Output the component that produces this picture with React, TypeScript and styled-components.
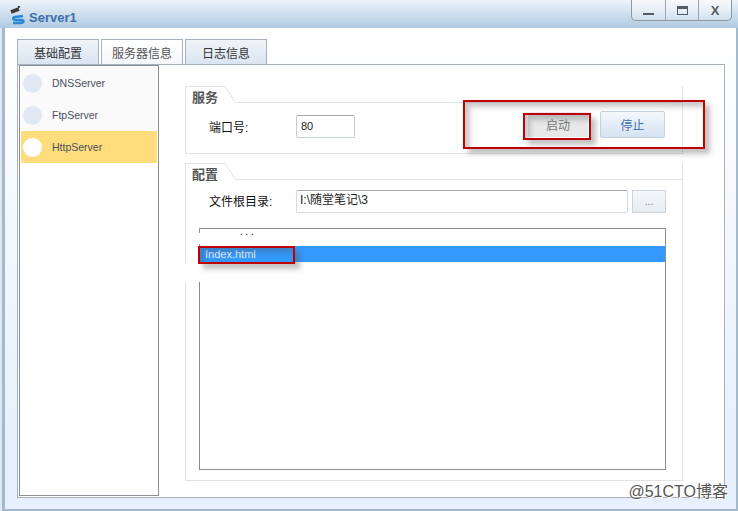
import { FC, ReactNode } from "react";
import styled, { createGlobalStyle } from "styled-components";

const UI_FONT = `"Liberation Sans", "Noto Sans CJK SC", sans-serif`;

const GlobalStyle = createGlobalStyle`
  html, body {
    margin: 0;
    padding: 0;
    background: #fff;
  }
  * {
    box-sizing: border-box;
  }
`;

const services = ["DNSServer", "FtpServer", "HttpServer"];

const Group: FC<{ title: string; children: ReactNode }> = ({ title, children }) => (
  <GroupBox>
    <GroupHead>
      <GroupTitle>{title}</GroupTitle>
      <svg width="11" height="17" viewBox="0 0 11 17">
        <path d="M0 0.5 L10.5 16.5" stroke="#e2e2e2" fill="none" />
      </svg>
      <GroupLine />
    </GroupHead>
    {children}
  </GroupBox>
);

export default function App() {
  return (
    <>
      <GlobalStyle />
      <Window>
        <TitleBar>
          <svg width="16" height="19" viewBox="0 0 16 19">
            <path d="M1 6 L9 3" stroke="#3a3a3a" strokeWidth="3.5" fill="none" />
            <path d="M8 1 L10 0.5" stroke="#3a3a3a" strokeWidth="2" fill="none" />
            <path
              d="M13 10 L5 11 C2 12 3 14 6 14 L12 14 C15 15 13 17 10 17 L3 17"
              stroke="#2a86d6"
              strokeWidth="2.6"
              fill="none"
            />
          </svg>
          <AppName>Server1</AppName>
          <WindowButtons>
            <WindowButton>
              <MinGlyph />
            </WindowButton>
            <WindowButton>
              <MaxGlyph />
            </WindowButton>
            <WindowButton>
              <CloseGlyph>X</CloseGlyph>
            </WindowButton>
          </WindowButtons>
        </TitleBar>
        <Client>
          <Tabs>
            <Tab>基础配置</Tab>
            <Tab $active>服务器信息</Tab>
            <Tab>日志信息</Tab>
          </Tabs>
          <Panel>
            <Sidebar>
              {services.map((name) => (
                <ServiceItem key={name} $selected={name === "HttpServer"}>
                  <ServiceDot $selected={name === "HttpServer"} />
                  {name}
                </ServiceItem>
              ))}
            </Sidebar>
            <Content>
              <Group title="服务">
                <ServiceRow>
                  <PortLabel>端口号:</PortLabel>
                  <PortInput>80</PortInput>
                  <StartButton>启动</StartButton>
                  <StopButton>停止</StopButton>
                </ServiceRow>
              </Group>
              <Group title="配置">
                <PathRow>
                  <PathLabel>文件根目录:</PathLabel>
                  <PathInput>I:\随堂笔记\3</PathInput>
                  <BrowseButton>...</BrowseButton>
                </PathRow>
                <FileList>
                  <ParentRow>. . .</ParentRow>
                  <SelectedRow>Index.html</SelectedRow>
                </FileList>
              </Group>
            </Content>
          </Panel>
        </Client>
        <ListGap />
        <GroupGap />
        <RedBox $x={463} $y={100} $w={242} $h={49} />
        <RedBox $x={523} $y={113} $w={68} $h={27} />
        <RedBox $x={198} $y={246} $w={97} $h={18} />
        <Watermark>@51CTO博客</Watermark>
      </Window>
    </>
  );
}

const Window = styled.div`
  position: relative;
  width: 738px;
  height: 511px;
  display: flex;
  flex-direction: column;
  padding: 0 2px 2px 5px;
  overflow: hidden;
  background: linear-gradient(to right, #dfe8f0 2px, #a3b9cc 2px);
  font-family: ${UI_FONT};
  font-size: 12px;
  color: #222;
`;

const TitleBar = styled.div`
  flex: 0 0 28px;
  margin: 0 -2px 0 -5px;
  padding-left: 10px;
  display: flex;
  align-items: flex-start;
  gap: 3px;
  background: linear-gradient(#eef3f9, #afcae2);
  svg {
    margin-top: 6px;
    flex: none;
  }
`;

const AppName = styled.div`
  margin-top: 10px;
  font-size: 13px;
  font-weight: bold;
  color: #3e6fa8;
`;

const WindowButtons = styled.div`
  display: flex;
  margin-left: auto;
  margin-right: 6px;
  height: 21px;
  border: 1px solid #8e979f;
  border-top: none;
  border-radius: 0 0 5px 5px;
  background: linear-gradient(rgba(255, 255, 255, 0.5), rgba(255, 255, 255, 0.25));
`;

const WindowButton = styled.div`
  width: 33px;
  display: flex;
  align-items: center;
  justify-content: center;
  & + & {
    border-left: 1px solid #9aa3ab;
  }
`;

const MinGlyph = styled.div`
  width: 11px;
  height: 2px;
  margin-top: 8px;
  background: #555b66;
`;

const MaxGlyph = styled.div`
  width: 11px;
  height: 9px;
  border: 1px solid #555b66;
  border-top-width: 3px;
`;

const CloseGlyph = styled.div`
  font-size: 13px;
  font-weight: bold;
  color: #555b66;
`;

const Client = styled.div`
  flex: 1;
  display: flex;
  flex-direction: column;
  padding: 11px 11px 11px 12px;
  background: linear-gradient(#fff, #e8f0fd 85%);
`;

const Tabs = styled.div`
  flex: 0 0 25px;
  display: flex;
  gap: 2px;
`;

const Tab = styled.div<{ $active?: boolean }>`
  width: 82px;
  display: flex;
  align-items: center;
  justify-content: center;
  font-size: 12px;
  color: ${(p) => (p.$active ? "#555" : "#333")};
  border: 1px solid #a9b2ba;
  border-bottom: none;
  background: ${(p) => (p.$active ? "linear-gradient(#fff, #f4f7fb)" : "linear-gradient(#f0f4f8, #d9e5f1)")};
`;

const Panel = styled.div`
  flex: 1;
  display: flex;
  padding: 0 0 1px 1px;
  border: 1px solid #a9b2ba;
  background: #fff;
`;

const Sidebar = styled.div`
  flex: 0 0 140px;
  padding: 1px;
  border: 1px solid #8a8f96;
  background: #fff;
`;

const ServiceItem = styled.div<{ $selected?: boolean }>`
  height: 32px;
  padding-left: 2px;
  display: flex;
  align-items: center;
  gap: 10px;
  font-size: 10.5px;
  color: #4a5060;
  background: ${(p) => (p.$selected ? "#ffdd7d" : "#fafafa")};
`;

const ServiceDot = styled.div<{ $selected?: boolean }>`
  width: 19px;
  height: 19px;
  border-radius: 50%;
  background: ${(p) => (p.$selected ? "#fff" : "#e1e8f3")};
`;

const Content = styled.div`
  flex: 1;
  display: flex;
  flex-direction: column;
  gap: 9px;
  padding: 21px 41px 15px 26px;
`;

const GroupBox = styled.section`
  display: flex;
  flex-direction: column;
  border: 1px solid #e2e2e2;
  border-top: none;
  &:last-child {
    flex: 1;
  }
`;

const GroupHead = styled.div`
  flex: 0 0 17px;
  display: flex;
  margin-left: -1px;
  svg {
    flex: none;
    display: block;
  }
`;

const GroupTitle = styled.div`
  width: 40px;
  height: 17px;
  padding: 2px 0 0 6px;
  border-top: 1px solid #e2e2e2;
  border-left: 1px solid #e2e2e2;
  font-size: 13px;
  font-weight: bold;
  line-height: 17px;
  color: #555;
`;

const GroupLine = styled.div`
  flex: 1;
  border-bottom: 1px solid #e2e2e2;
`;

const ServiceRow = styled.div`
  height: 50px;
  padding-top: 8px;
  display: flex;
  align-items: flex-start;
`;

const PortLabel = styled.div`
  width: 110px;
  padding: 7px 0 0 23px;
  color: #111;
`;

const PortInput = styled.div`
  width: 59px;
  height: 23px;
  margin-top: 4px;
  padding: 0 4px;
  line-height: 21px;
  font-size: 11px;
  border: 1px solid #c5cdd6;
  border-top-color: #a4a8ad;
  border-radius: 2px;
`;

const ActionButton = styled.div`
  height: 27px;
  display: flex;
  align-items: center;
  justify-content: center;
  border-radius: 2px;
`;

const StartButton = styled(ActionButton)`
  width: 60px;
  margin: 1px 0 0 173px;
  height: 25px;
  color: #777;
  background: #e8e8e8;
`;

const StopButton = styled(ActionButton)`
  width: 65px;
  margin-left: 12px;
  color: #3e6fa8;
  border: 1px solid #c8d2dd;
  background: linear-gradient(#f4f8fc, #d4e3f2);
`;

const PathRow = styled.div`
  height: 23px;
  margin-top: 10px;
  display: flex;
  align-items: center;
`;

const PathLabel = styled.div`
  width: 110px;
  padding: 0 0 2px 23px;
  color: #111;
`;

const PathInput = styled.div`
  width: 332px;
  height: 23px;
  padding: 0 3px;
  line-height: 19px;
  font-size: 12px;
  border: 1px solid #d4dbe3;
  border-top-color: #a4a8ad;
  border-radius: 2px;
`;

const BrowseButton = styled.div`
  width: 34px;
  height: 23px;
  margin-left: 4px;
  text-align: center;
  line-height: 21px;
  font-size: 10px;
  color: #777;
  border: 1px solid #ccd3da;
  background: linear-gradient(#f6f8fa, #e6ebf0);
`;

const FileList = styled.div`
  flex: 1;
  margin: 15px 16px 10px 13px;
  border: 1px solid #8a8f96;
  background: #fff;
`;

const ParentRow = styled.div`
  height: 17px;
  padding-left: 40px;
  font-size: 10px;
  line-height: 5px;
`;

const SelectedRow = styled.div`
  height: 16px;
  padding-left: 5px;
  font-size: 11px;
  line-height: 16px;
  color: #e8f2ff;
  background: #3399ff;
`;

/* white patches where the screenshot was retouched */
const ListGap = styled.div`
  position: absolute;
  left: 199px;
  top: 233px;
  width: 1px;
  height: 11px;
  background: #fff;
`;

const GroupGap = styled.div`
  position: absolute;
  left: 185px;
  top: 263px;
  width: 15px;
  height: 19px;
  background: #fff;
`;

const RedBox = styled.div<{ $x: number; $y: number; $w: number; $h: number }>`
  position: absolute;
  left: ${(p) => p.$x}px;
  top: ${(p) => p.$y}px;
  width: ${(p) => p.$w}px;
  height: ${(p) => p.$h}px;
  border: 2px solid #c00000;
  box-shadow: 5px 5px 5px rgba(80, 80, 80, 0.35), inset 5px 5px 5px rgba(80, 80, 80, 0.3);
`;

const Watermark = styled.div`
  position: absolute;
  right: 10px;
  bottom: 10px;
  font-size: 16px;
  line-height: 18px;
  color: #555;
  text-shadow: 0 0 1px #fff, 1px 1px 0 #fff;
`;
